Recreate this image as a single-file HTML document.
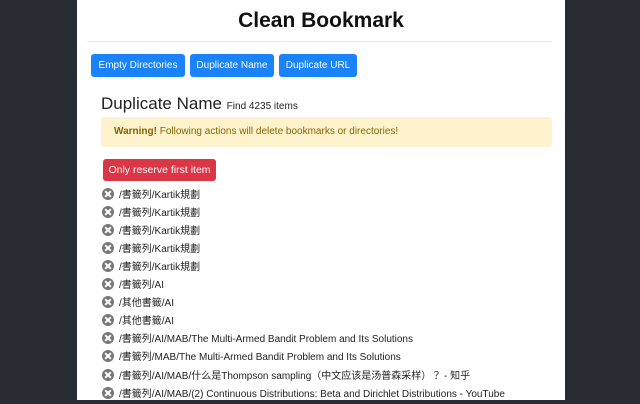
<!DOCTYPE html>
<html><head><meta charset="utf-8"><style>
body{margin:0;width:640px;height:400px;background:#282c33;overflow:hidden;font-family:"Liberation Sans","Noto Sans CJK TC",sans-serif;}
.panel{position:absolute;left:77px;top:0;width:488px;height:400px;background:#fff;}
h1{position:absolute;left:0;width:488px;top:9px;margin:0;text-align:center;font-size:21px;font-weight:bold;color:#111;}
.hr{position:absolute;left:10px;width:465px;top:41px;height:1px;background:#e8e8e8;}
.btn{position:absolute;top:54px;height:23px;line-height:23px;background:#1a82fb;color:#fff;font-size:10px;text-align:center;border-radius:3px;}
h2{position:absolute;left:24px;top:94px;margin:0;font-size:17px;font-weight:normal;color:#222;}
h2 small{font-size:10px;}
.warn{position:absolute;left:24px;top:117px;width:451px;height:30px;background:#fff3cd;border-radius:3px;color:#856404;font-size:10px;line-height:30px;}
.red{position:absolute;left:26px;top:159px;width:113px;height:22px;line-height:22px;background:#dc3545;color:#fff;font-size:10.5px;text-align:center;border-radius:3px;}
.row{position:absolute;left:25px;height:18px;line-height:18px;font-size:10px;color:#222;white-space:nowrap;}
.row i{display:inline-block;width:12px;height:12px;border-radius:50%;background:#777;vertical-align:-2px;margin-right:5px;position:relative;}
.row i:before,.row i:after{content:"";position:absolute;left:5px;top:2px;width:2px;height:8px;background:#fff;transform:rotate(45deg);}
.row i:after{transform:rotate(-45deg);}
</style></head><body>
<div class="panel">
<h1>Clean Bookmark</h1>
<div class="hr"></div>
<div class="btn" style="left:14px;width:94px">Empty Directories</div>
<div class="btn" style="left:113px;width:84px">Duplicate Name</div>
<div class="btn" style="left:202px;width:78px">Duplicate URL</div>
<h2>Duplicate Name <small>Find 4235 items</small></h2>
<div class="warn"><span style="padding-left:13px"><b>Warning!</b> Following actions will delete bookmarks or directories!</span></div>
<div class="red">Only reserve first item</div>
<div class="row" style="top:187px"><i></i>/書籤列/Kartik規劃</div>
<div class="row" style="top:205px"><i></i>/書籤列/Kartik規劃</div>
<div class="row" style="top:223px"><i></i>/書籤列/Kartik規劃</div>
<div class="row" style="top:241px"><i></i>/書籤列/Kartik規劃</div>
<div class="row" style="top:259px"><i></i>/書籤列/Kartik規劃</div>
<div class="row" style="top:277px"><i></i>/書籤列/AI</div>
<div class="row" style="top:295px"><i></i>/其他書籤/AI</div>
<div class="row" style="top:313px"><i></i>/其他書籤/AI</div>
<div class="row" style="top:331px"><i></i>/書籤列/AI/MAB/The Multi-Armed Bandit Problem and Its Solutions</div>
<div class="row" style="top:349px"><i></i>/書籤列/MAB/The Multi-Armed Bandit Problem and Its Solutions</div>
<div class="row" style="top:368px"><i></i>/書籤列/AI/MAB/什么是Thompson sampling（中文应该是汤普森采样）？ - 知乎</div>
<div class="row" style="top:386px"><i></i>/書籤列/AI/MAB/(2) Continuous Distributions: Beta and Dirichlet Distributions - YouTube</div>
</div>
</body></html>
